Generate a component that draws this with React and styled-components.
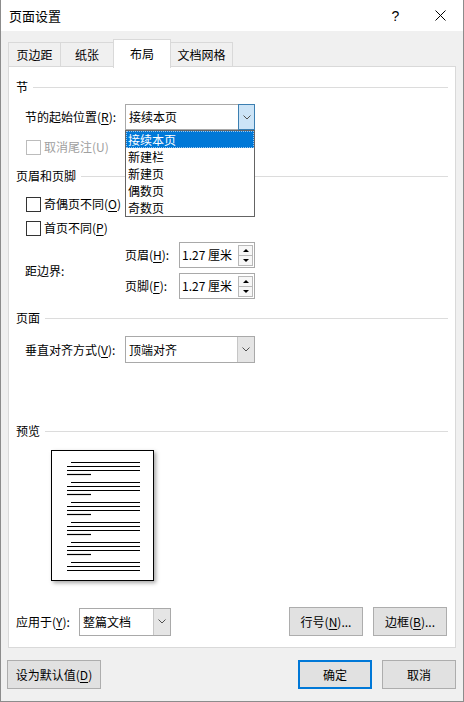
import React from 'react';
import styled, { createGlobalStyle } from 'styled-components';

const GlobalStyle = createGlobalStyle`
  html, body { margin: 0; padding: 0; background: #fff; }
  body {
    font-family: "Noto Sans CJK SC", "Microsoft YaHei", sans-serif;
    font-size: 12px;
    line-height: 16px;
    color: #000;
  }
  * { box-sizing: border-box; }
  u { text-underline-offset: 2px; }
`;

const Window = styled.div`
  width: 464px;
  height: 702px;
  border: 1px solid #8c8c8c;
  border-top: none;
  background: #f0f0f0;
  display: flex;
  flex-direction: column;
`;

const TitleBar = styled.div`
  height: 31px;
  background: #fff;
  display: flex;
  align-items: center;
  padding-left: 8px;
  font-size: 13px;
`;

const TitleButton = styled.div`
  width: 45px;
  height: 31px;
  display: flex;
  align-items: center;
  justify-content: center;
  font-family: "Liberation Sans", Arial, sans-serif;
  font-size: 14px;
  &:first-of-type { margin-left: auto; }
`;

const TabRow = styled.div`
  display: flex;
  padding: 11px 0 0 7px;
  height: 36px;
`;

const Tab = styled.div`
  width: ${p => p.$w}px;
  height: ${p => (p.$active ? 29 : 25)}px;
  margin-top: ${p => (p.$active ? -3 : 0)}px;
  margin-right: -1px;
  border: 1px solid #d9d9d9;
  border-bottom: ${p => (p.$active ? 'none' : '1px solid #d9d9d9')};
  background: ${p => (p.$active ? '#fff' : '#f0f0f0')};
  display: flex;
  align-items: center;
  justify-content: center;
  padding-top: ${p => (p.$active ? 0 : 1)}px;
  position: relative;
  z-index: ${p => (p.$active ? 2 : 1)};
`;

const Panel = styled.div`
  width: 448px;
  height: 582px;
  margin-left: 7px;
  margin-top: -1px;
  border: 1px solid #d9d9d9;
  background: #fff;
  display: flex;
  flex-direction: column;
  padding-bottom: 11px;
`;

const SectionHead = styled.div`
  display: flex;
  align-items: center;
  gap: 5px;
  height: 16px;
  margin: ${p => p.$mt}px 7px 0 7px;
  &::after {
    content: '';
    flex: 1;
    height: 1px;
    background: #dcdcdc;
  }
`;

const Row = styled.div`
  display: flex;
  align-items: center;
  margin-top: ${p => p.$mt}px;
  padding-left: 16px;
`;

const Label = styled.span`
  width: ${p => p.$w}px;
  flex-shrink: 0;
  white-space: nowrap;
`;

const Combo = styled.div`
  position: relative;
  width: ${p => p.$w}px;
  height: ${p => p.$h ?? 26}px;
  border: 1px solid #a9a9a9;
  display: flex;
  background: #fff;
`;

const ComboText = styled.div`
  flex: 1;
  display: flex;
  align-items: center;
  padding-left: 3px;
`;

const ComboButton = styled.div`
  width: 17px;
  margin: ${p => (p.$open ? '-1px -1px -1px 0' : '0')};
  border: ${p => (p.$open ? '1px solid #3c7fb1' : 'none')};
  border-left: 1px solid ${p => (p.$open ? '#3c7fb1' : '#c6c6c6')};
  background: ${p => (p.$open ? '#cce4f7' : '#e5e5e5')};
  display: flex;
  align-items: center;
  justify-content: center;
`;

const DropList = styled.div`
  position: absolute;
  top: 25px;
  left: -1px;
  width: 130px;
  border: 1px solid #646464;
  background: #fff;
  z-index: 10;
`;

const DropItem = styled.div`
  height: 17px;
  padding-left: 2px;
  display: flex;
  align-items: center;
  background: ${p => (p.$sel ? '#0078d7' : 'transparent')};
  color: ${p => (p.$sel ? '#fff' : '#000')};
  outline: ${p => (p.$sel ? '1px dotted #9fc6ea' : 'none')};
  outline-offset: -1px;
`;

const Check = styled.div`
  display: flex;
  align-items: center;
  margin-top: ${p => p.$mt}px;
  padding-left: 17px;
  color: ${p => (p.$disabled ? '#a0a0a0' : '#000')};
  &::before {
    content: '';
    width: 13px;
    height: 13px;
    border: 1px solid ${p => (p.$disabled ? '#bcbcbc' : '#333')};
    margin-right: 3px;
    background: #fff;
  }
`;

const SpinColumn = styled.div`
  display: flex;
  flex-direction: column;
  gap: 5px;
`;

const SpinRow = styled.div`
  display: flex;
  align-items: center;
`;

const Spinner = styled.div`
  width: 76px;
  height: 26px;
  border: 1px solid #a9a9a9;
  display: flex;
  align-items: center;
  padding: 0 1px 0 2px;
`;

const SpinText = styled.span`
  flex: 1;
`;

const SpinButtons = styled.div`
  width: 15px;
  height: 21px;
  border: 1px solid #b9b9b9;
  display: flex;
  flex-direction: column;
`;

const SpinButton = styled.div`
  flex: 1;
  background: #f7f7f7;
  display: flex;
  align-items: center;
  justify-content: center;
  & + & { border-top: 1px solid #b9b9b9; }
`;

const PreviewPage = styled.div`
  width: 103px;
  height: 131px;
  margin: 11px 0 0 42px;
  border: 1px solid #000;
  background: #fff;
  box-shadow: 2px 2px 4px rgba(0, 0, 0, 0.35);
`;

const BottomRow = styled.div`
  display: flex;
  align-items: center;
  margin-top: auto;
  padding: 0 8px 0 7px;
`;

const Button = styled.button`
  width: ${p => p.$w ?? 74}px;
  height: 29px;
  margin-left: ${p => p.$ml ?? 0}px;
  font: inherit;
  color: #000;
  background: #e1e1e1;
  border: ${p => (p.$primary ? '2px solid #0078d7' : '1px solid #adadad')};
  padding: 0;
  display: flex;
  align-items: center;
  justify-content: center;
`;

const Footer = styled.div`
  display: flex;
  align-items: center;
  margin-top: 12px;
  padding: 0 6px;
`;

const Chevron = () => (
  <svg width="8" height="5" viewBox="0 0 8 5">
    <path d="M0.5 0.5 L4 4 L7.5 0.5" fill="none" stroke="#505050" strokeWidth="1" />
  </svg>
);

const Triangle = ({ up }) => (
  <svg width="6" height="3" viewBox="0 0 6 3">
    <path d={up ? 'M0 3 L3 0 L6 3 Z' : 'M0 0 L3 3 L6 0 Z'} fill="#000" />
  </svg>
);

const Spin = ({ value }) => (
  <Spinner>
    <SpinText>{value}</SpinText>
    <SpinButtons>
      <SpinButton><Triangle up /></SpinButton>
      <SpinButton><Triangle /></SpinButton>
    </SpinButtons>
  </Spinner>
);

const PreviewLines = () => {
  const lines = [];
  for (let g = 0; g < 6; g++) {
    const y = 11.5 + g * 20;
    lines.push([19, 88, y]);
    lines.push([15, 88, y + 4]);
    lines.push([15, 88, y + 8]);
    if (g < 5) lines.push([15, 39, y + 12]);
  }
  return (
    <svg width="101" height="129" viewBox="0 0 101 129">
      {lines.map(([x1, x2, y], i) => (
        <line key={i} x1={x1} x2={x2} y1={y} y2={y} stroke="#000" strokeWidth="1.2" />
      ))}
    </svg>
  );
};

const options = ['接续本页', '新建栏', '新建页', '偶数页', '奇数页'];

export default function App() {
  return (
    <>
      <GlobalStyle />
      <Window>
        <TitleBar>
          页面设置
          <TitleButton>?</TitleButton>
          <TitleButton>
            <svg width="11" height="11" viewBox="0 0 11 11">
              <path d="M0.5 0.5 L10.5 10.5 M10.5 0.5 L0.5 10.5" stroke="#000" strokeWidth="1" />
            </svg>
          </TitleButton>
        </TitleBar>

        <TabRow>
          <Tab $w={53}>页边距</Tab>
          <Tab $w={54}>纸张</Tab>
          <Tab $w={58} $active>布局</Tab>
          <Tab $w={63}>文档网格</Tab>
        </TabRow>

        <Panel>
          <SectionHead $mt={12}>节</SectionHead>
          <Row $mt={9}>
            <Label $w={100}>节的起始位置(<u>R</u>):</Label>
            <Combo $w={130}>
              <ComboText>接续本页</ComboText>
              <ComboButton $open><Chevron /></ComboButton>
              <DropList>
                {options.map((o, i) => (
                  <DropItem key={o} $sel={i === 0}>{o}</DropItem>
                ))}
              </DropList>
            </Combo>
          </Row>
          <Check $mt={9} $disabled>取消尾注(U)</Check>

          <SectionHead $mt={13}>页眉和页脚</SectionHead>
          <Check $mt={12}>奇偶页不同(<u>O</u>)</Check>
          <Check $mt={8}>首页不同(<u>P</u>)</Check>
          <Row $mt={6}>
            <Label $w={100}>距边界:</Label>
            <SpinColumn>
              <SpinRow>
                <Label $w={54}>页眉(<u>H</u>):</Label>
                <Spin value="1.27 厘米" />
              </SpinRow>
              <SpinRow>
                <Label $w={54}>页脚(<u>F</u>):</Label>
                <Spin value="1.27 厘米" />
              </SpinRow>
            </SpinColumn>
          </Row>

          <SectionHead $mt={11}>页面</SectionHead>
          <Row $mt={10}>
            <Label $w={100}>垂直对齐方式(<u>V</u>):</Label>
            <Combo $w={130} $h={27}>
              <ComboText>顶端对齐</ComboText>
              <ComboButton><Chevron /></ComboButton>
            </Combo>
          </Row>

          <SectionHead $mt={60}>预览</SectionHead>
          <PreviewPage>
            <PreviewLines />
          </PreviewPage>

          <BottomRow>
            <Label $w={63}>应用于(<u>Y</u>):</Label>
            <Combo $w={92} $h={28}>
              <ComboText>整篇文档</ComboText>
              <ComboButton><Chevron /></ComboButton>
            </Combo>
            <Button $ml={118}>行号(<u>N</u>)...</Button>
            <Button $ml={10}>边框(<u>B</u>)...</Button>
          </BottomRow>
        </Panel>

        <Footer>
          <Button $w={94}>设为默认值(<u>D</u>)</Button>
          <Button $ml={197} $primary>确定</Button>
          <Button $ml={10}>取消</Button>
        </Footer>
      </Window>
    </>
  );
}
